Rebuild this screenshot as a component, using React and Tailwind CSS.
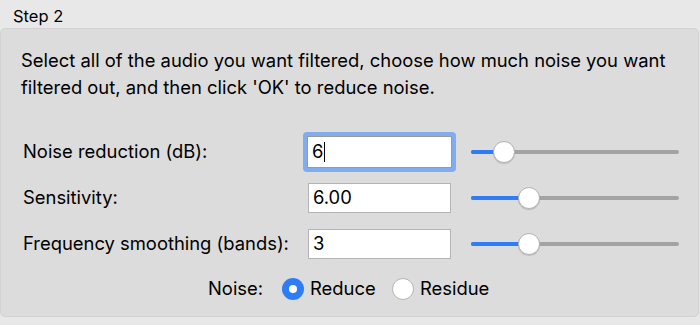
import React from "react";

function Slider({ pos }) {
  return (
    <div className="relative w-[208px] h-[24px] flex items-center">
      <div className="h-[4px] w-full rounded-full bg-[#a3a3a3]" />
      <div className="absolute left-0 h-[4px] rounded-full bg-[#2f7df6]" style={{ width: pos }} />
      <div
        className="absolute top-[1px] w-[22px] h-[22px] rounded-full bg-white border border-[#b4b4b4] shadow-[0_1px_1px_rgba(0,0,0,0.15)]"
        style={{ left: pos - 11 }}
      />
    </div>
  );
}

function Field({ value, focused }) {
  if (focused) {
    return (
      <div className="w-[153px] h-[40px] rounded-[4px] bg-[#7fadef] p-[4px] -mx-[5px]">
        <div className="w-full h-full bg-white border border-[#9a9a9a] flex items-center pl-[4px] text-[18.4px] text-black">
          <span>{value}</span>
          <span className="w-[1px] h-[20px] bg-black ml-[1px]" />
        </div>
      </div>
    );
  }
  return (
    <div className="w-[143px] h-[30px] bg-white border border-[#b4b4b4] flex items-center pl-[4px] text-[18.4px] text-black">
      {value}
    </div>
  );
}

export default function App() {
  return (
    <div
      className="w-[700px] h-[325px] bg-[#e8e8e8] overflow-hidden text-black"
      style={{ fontFamily: 'Inter, "Liberation Sans", Arial, sans-serif' }}
    >
      <div className="pl-[13px] pt-[7px] h-[28px] text-[16.5px] leading-[18px]">Step 2</div>
      <div className="w-[699px] h-[289px] rounded-[5px] border border-[#d2d2d2] bg-[#dcdcdc] flex flex-col">
        <p className="pl-[20px] pt-[18px] text-[18.4px] leading-[27px]">
          Select all of the audio you want filtered, choose how much noise you want
          <br />
          filtered out, and then click 'OK' to reduce noise.
        </p>
        <div className="mt-[36px] flex flex-col gap-[16px] pl-[22px]">
          <div className="flex items-center h-[30px]">
            <span className="w-[285px] text-[18.4px]">Noise reduction (dB):</span>
            <Field value="6" focused />
            <div className="ml-[20px]">
              <Slider pos={33} />
            </div>
          </div>
          <div className="flex items-center h-[30px]">
            <span className="w-[285px] text-[18.4px]">Sensitivity:</span>
            <Field value="6.00" />
            <div className="ml-[20px]">
              <Slider pos={58} />
            </div>
          </div>
          <div className="flex items-center h-[30px]">
            <span className="w-[285px] text-[18.4px]">Frequency smoothing (bands):</span>
            <Field value="3" />
            <div className="ml-[20px]">
              <Slider pos={58} />
            </div>
          </div>
        </div>
        <div className="mt-[18px] flex items-center h-[24px] pl-[207px] text-[18.4px]">
          <span className="w-[74px]">Noise:</span>
          <div className="w-[22px] h-[22px] rounded-full bg-[#2f7df6] flex items-center justify-center">
            <div className="w-[8px] h-[8px] rounded-full bg-white" />
          </div>
          <span className="ml-[6px] w-[62px]">Reduce</span>
          <div className="ml-[20px] w-[22px] h-[22px] rounded-full bg-white border border-[#b4b4b4]" />
          <span className="ml-[6px]">Residue</span>
        </div>
      </div>
    </div>
  );
}
